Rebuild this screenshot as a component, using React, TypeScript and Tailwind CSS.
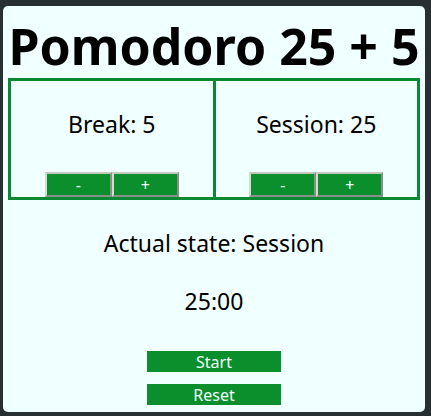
import { useEffect, useState } from "react";

type CounterProps = {
  label: string;
  value: number;
  onChange: (value: number) => void;
  className: string;
};

const stepButton =
  "h-[25px] w-[67px] border-2 border-t-[#c5c9bd] border-l-[#d5dbcf] border-r-[#87908a] border-b-[#87908a] bg-[#0b8f2c] text-base leading-5 text-[#f0ffff]";
const actionButton =
  "h-[21px] w-[134px] bg-[#0b8f2c] text-base leading-5 text-[#f0ffff]";

function Counter({ label, value, onChange, className }: CounterProps) {
  return (
    <section className={`flex flex-1 flex-col items-center border-[#0b8832] ${className}`}>
      <p className="pt-[27px] pb-8 text-[23px] leading-8">
        {label}: {value}
      </p>
      <div className="flex">
        <button
          type="button"
          aria-label={`Decrease ${label}`}
          className={stepButton}
          onClick={() => onChange(Math.max(1, value - 1))}
        >
          -
        </button>
        <button
          type="button"
          aria-label={`Increase ${label}`}
          className={stepButton}
          onClick={() => onChange(Math.min(60, value + 1))}
        >
          +
        </button>
      </div>
    </section>
  );
}

export default function App() {
  const [breakLength, setBreakLength] = useState(5);
  const [sessionLength, setSessionLength] = useState(25);
  const [seconds, setSeconds] = useState(25 * 60);
  const [running, setRunning] = useState(false);
  const [phase, setPhase] = useState("Session");

  useEffect(() => {
    if (!running) return;
    const timer = setTimeout(() => {
      if (seconds > 0) {
        setSeconds(seconds - 1);
      } else {
        const next = phase === "Session" ? "Break" : "Session";
        setPhase(next);
        setSeconds((next === "Session" ? sessionLength : breakLength) * 60);
      }
    }, 1000);
    return () => clearTimeout(timer);
  }, [running, seconds, phase, sessionLength, breakLength]);

  const changeSession = (value: number) => {
    setSessionLength(value);
    if (!running) setSeconds(value * 60);
  };

  const reset = () => {
    setRunning(false);
    setBreakLength(5);
    setSessionLength(25);
    setSeconds(25 * 60);
    setPhase("Session");
  };

  const minutes = String(Math.floor(seconds / 60)).padStart(2, "0");
  const rest = String(seconds % 60).padStart(2, "0");

  return (
    <div className="min-h-screen bg-[#272f32] pt-1.5 pr-1.5 pb-1 pl-[3px] font-['Noto_Sans',sans-serif] text-black">
      <main className="flex flex-col items-center rounded-[5px] bg-[#f0ffff] px-[5px] pb-[7px]">
        <h1 className="pt-2 text-[50px] leading-16 font-bold whitespace-nowrap">Pomodoro 25 + 5</h1>
        <div className="flex w-full">
          <Counter
            label="Break"
            value={breakLength}
            onChange={setBreakLength}
            className="border-y-[3px] border-l-[3px]"
          />
          <Counter
            label="Session"
            value={sessionLength}
            onChange={changeSession}
            className="border-[3px]"
          />
        </div>
        <p className="pt-[27px] text-[23px] leading-8">Actual state: {phase}</p>
        <p className="pt-[26px] pb-[34px] text-[23px] leading-8">
          {minutes}:{rest}
        </p>
        <div className="flex flex-col gap-3">
          <button type="button" className={actionButton} onClick={() => setRunning(!running)}>
            {running ? "Stop" : "Start"}
          </button>
          <button type="button" className={actionButton} onClick={reset}>
            Reset
          </button>
        </div>
      </main>
    </div>
  );
}
